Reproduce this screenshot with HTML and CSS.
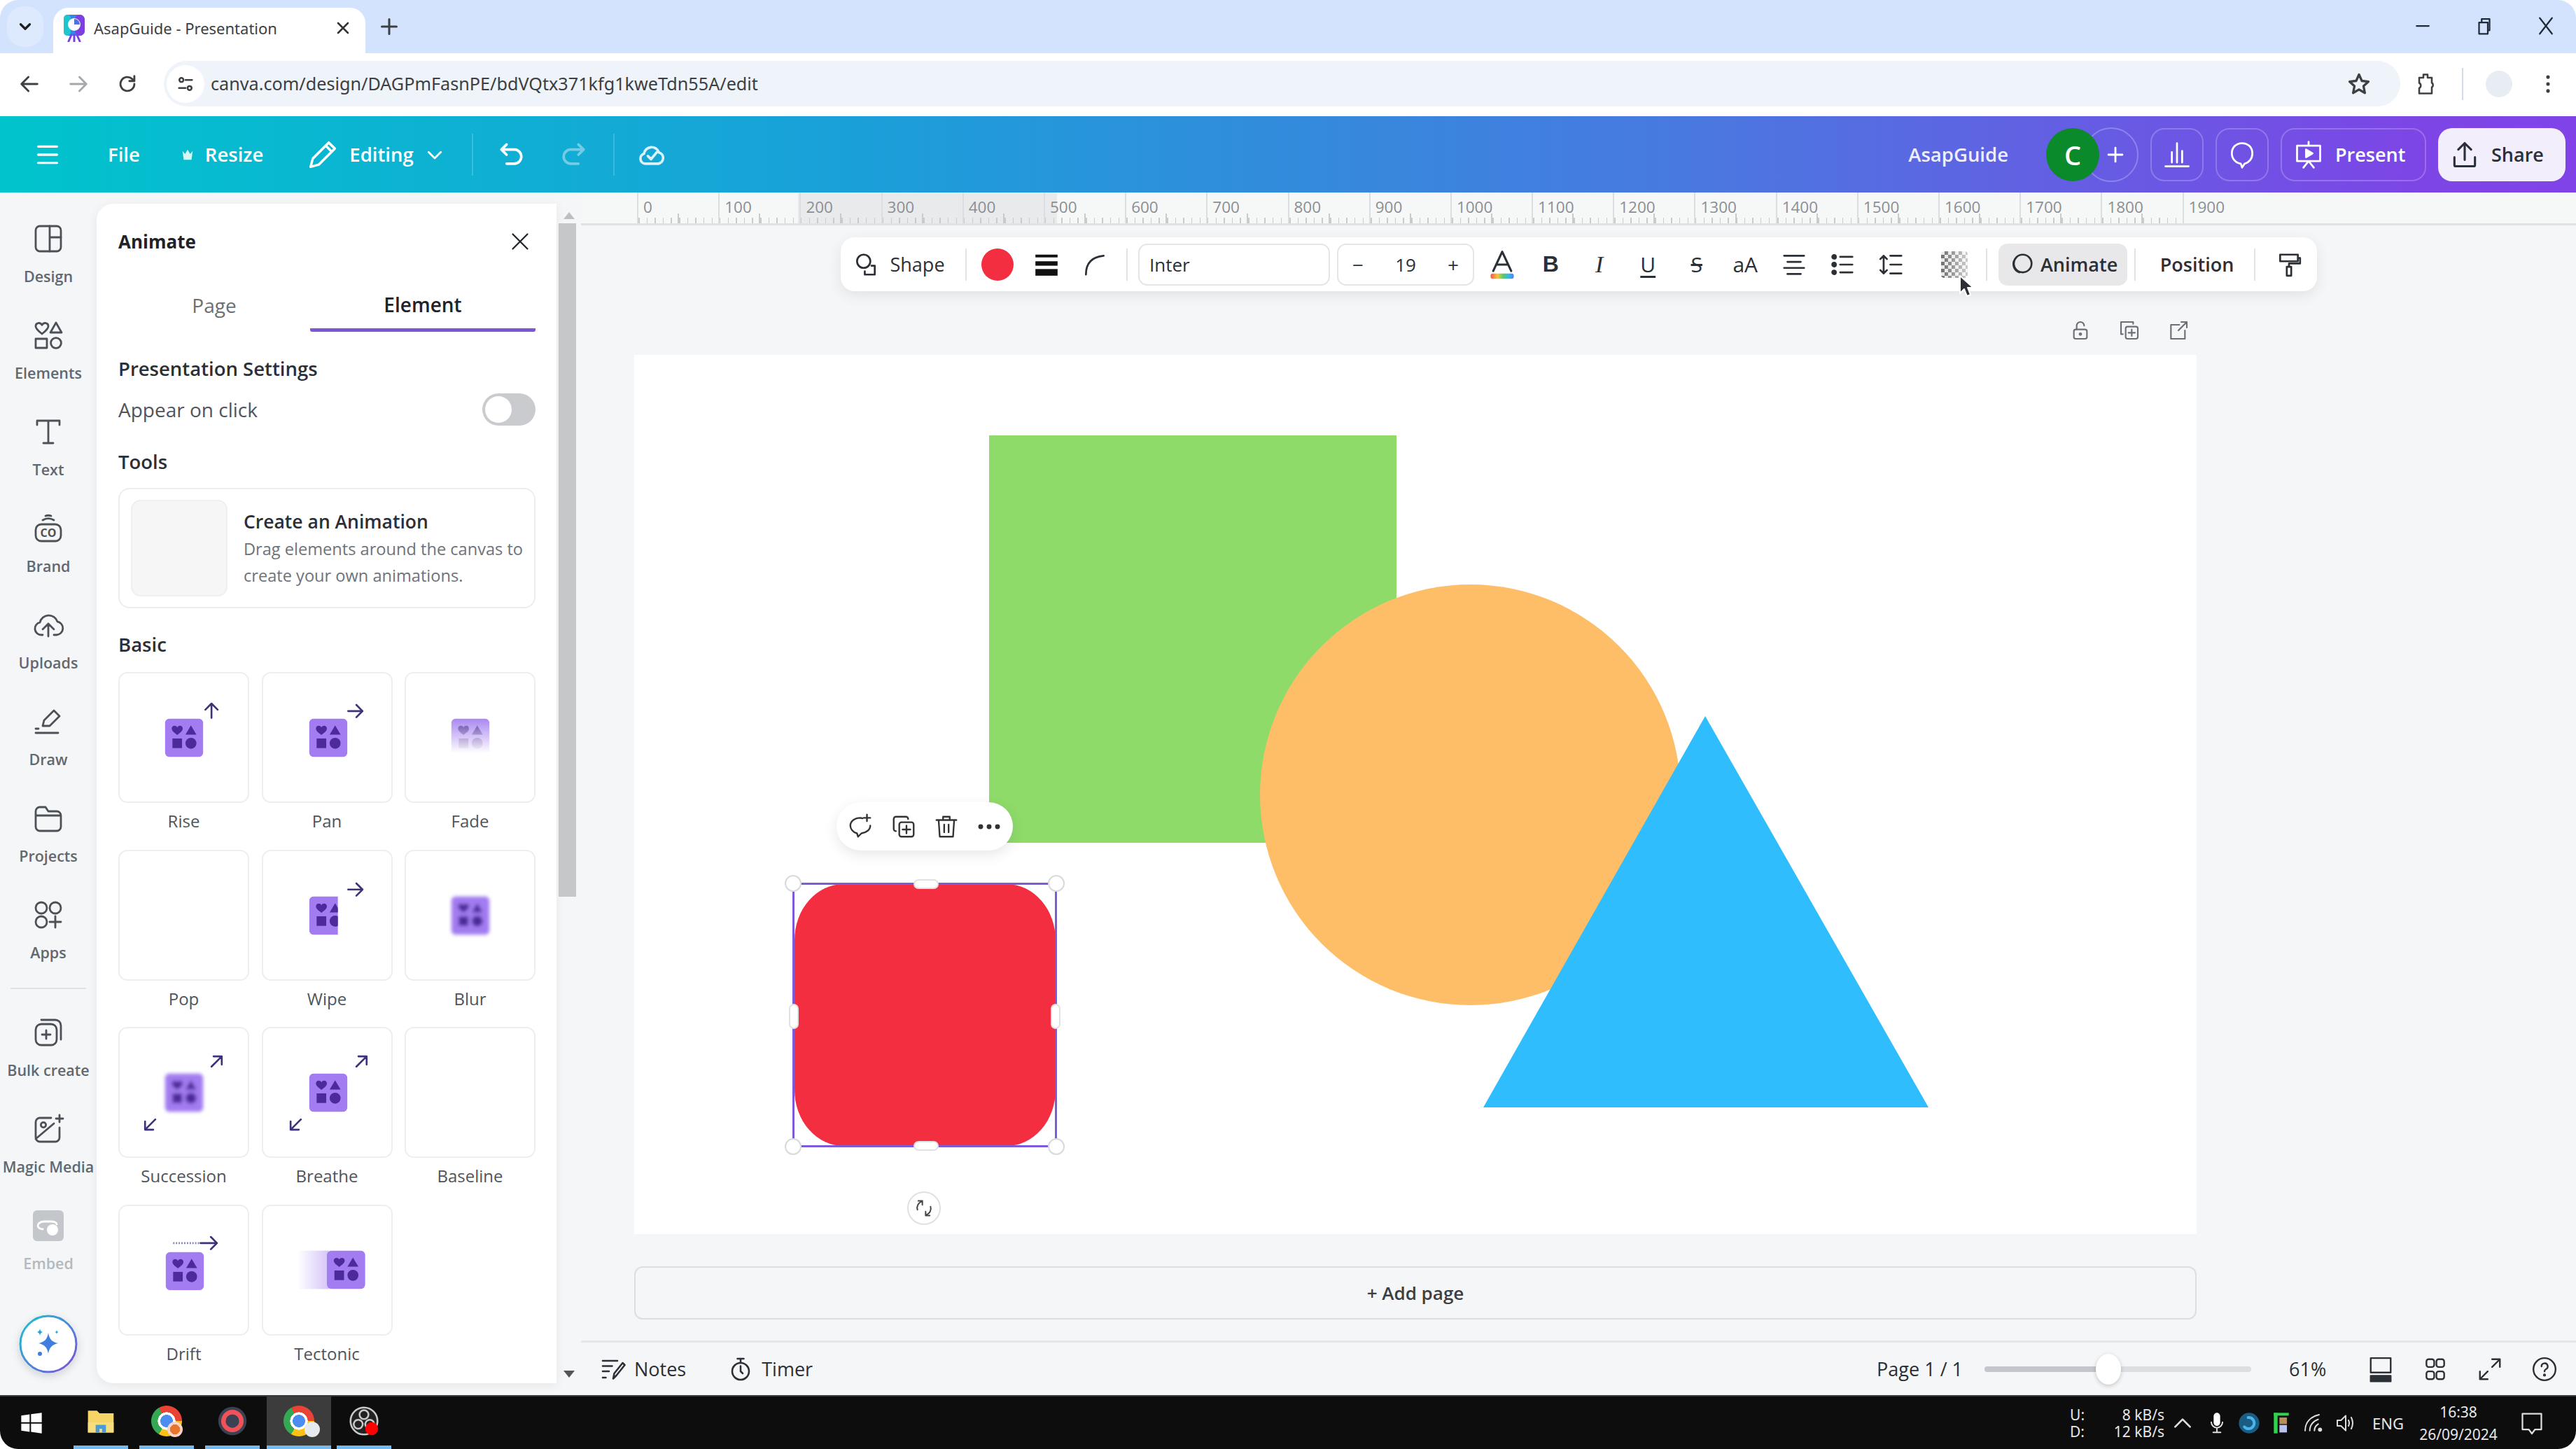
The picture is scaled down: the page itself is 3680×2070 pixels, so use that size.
FILE: index.html
```html
<!DOCTYPE html>
<html lang="en">
<head>
<meta charset="utf-8">
<title>AsapGuide - Presentation</title>
<link rel="stylesheet" href="styles.css">
</head>
<body>
<svg class="defs" width="0" height="0" aria-hidden="true">
  <defs>
    <symbol id="shapes" viewBox="0 0 56 56">
      <rect width="56" height="56" rx="7" fill="#a27cf0" stroke="none"/>
      <path d="M18 24c-3-2.600-8-5.500-8-9.500 0-4.500 6-5.500 8-1.500 2-4 8-3 8 1.500 0 4-5 6.900-8 9.500z" fill="#4c2a9a" stroke="none"/>
      <path d="M38 10l8 13.500H30z" fill="#4c2a9a" stroke="none"/>
      <rect x="11" y="29" width="14" height="14" fill="#4c2a9a" stroke="none"/>
      <circle cx="38" cy="36" r="8" fill="#4c2a9a" stroke="none"/>
    </symbol>
    <linearGradient id="fadeG" x1="0" y1="0" x2="0" y2="1"><stop offset="0" stop-color="#fff" stop-opacity=".05"/><stop offset=".85" stop-color="#fff" stop-opacity="1"/></linearGradient>
    <linearGradient id="trailG" x1="0" y1="0" x2="1" y2="0"><stop offset="0" stop-color="#a27cf0" stop-opacity="0"/><stop offset="1" stop-color="#a27cf0" stop-opacity=".45"/></linearGradient>
    <linearGradient id="aiG" x1="0" y1="0" x2="1" y2="1"><stop offset="0" stop-color="#16c5d0"/><stop offset="1" stop-color="#7d4ddd"/></linearGradient>
    <linearGradient id="rainbow" x1="0" y1="0" x2="1" y2="0"><stop offset="0" stop-color="#f55a4a"/><stop offset=".3" stop-color="#f8c537"/><stop offset=".55" stop-color="#52cc6e"/><stop offset=".8" stop-color="#2fb6f0"/><stop offset="1" stop-color="#5a7cf0"/></linearGradient>
    <filter id="soft"><feGaussianBlur stdDeviation="2.800"/></filter>
    <clipPath id="wipeClip"><rect x="67" y="60" width="42" height="70"/></clipPath>
  </defs>
</svg>

<div class="screen">
  <!-- Browser tabs -->
  <div class="tabstrip">
    <div class="tab-list"><svg class="ic-chev" viewBox="0 0 24 24"><path d="M6 9l6 6 6-6"/></svg></div>
    <div class="tab">
      <svg class="favicon" viewBox="0 0 32 40"><rect x="1" y="1" width="30" height="30" rx="7" fill="#3b82e8"/><rect x="17" y="1" width="14" height="30" rx="7" fill="#7d3fe0"/><rect x="1" y="1" width="10" height="30" rx="5" fill="#1fc4cf"/><circle cx="16" cy="15" r="9" fill="#fff"/><path d="M16 15V7a8 8 0 0 1 8 8z" fill="#4f72e0"/><path class="fav-legs" d="M12 30l-4 9M20 30l4 9M16 30v9"/></svg>
      <span class="tab-title">AsapGuide - Presentation</span>
      <svg class="tab-close" viewBox="0 0 24 24"><path d="M5 5l14 14M19 5L5 19"/></svg>
    </div>
    <svg class="tab-new" viewBox="0 0 24 24"><path d="M12 3v18M3 12h18"/></svg>
    <div class="winctl">
      <svg viewBox="0 0 24 24"><path d="M5 12h14"/></svg>
      <svg viewBox="0 0 24 24"><rect x="6" y="8" width="10" height="13"/><path d="M9 8V4h9v13h-2"/></svg>
      <svg viewBox="0 0 24 24"><path d="M5 3l14 18M19 3L5 21"/></svg>
    </div>
  </div>

  <!-- Browser toolbar -->
  <div class="browserbar">
    <svg class="bb-ic" viewBox="0 0 24 24"><path d="M20 12H5M11 5l-7 7 7 7"/></svg>
    <svg class="bb-ic dim" viewBox="0 0 24 24"><path d="M4 12h15M13 5l7 7-7 7"/></svg>
    <svg class="bb-ic" viewBox="0 0 24 24"><path d="M19 12a7 7 0 1 1-2.200-5.100L19 9M19 4v5h-5"/></svg>
    <div class="omnibox">
      <span class="tune"><svg viewBox="0 0 24 24"><circle cx="7" cy="7" r="2.500"/><path d="M12 7h8M4 17h8"/><circle cx="17" cy="17" r="2.500"/></svg></span>
      <span class="url">canva.com/design/DAGPmFasnPE/bdVQtx371kfg1kweTdn55A/edit</span>
      <svg class="star" viewBox="0 0 24 24"><path d="M12 3l2.700 6 6.300.7-4.700 4.300 1.300 6.500L12 17.200 6.400 20.500 7.700 14 3 9.700 9.300 9z"/></svg>
    </div>
    <svg class="bb-ic ext" viewBox="0 0 24 24"><path d="M6 6h4V3h4v3h4v5c1.500.5 1.500 3.500 0 4v6H6v-5c2-1 2-4 0-5z"/></svg>
    <span class="bb-sep"></span>
    <span class="avatar"></span>
    <svg class="bb-ic dots" viewBox="0 0 24 24"><circle cx="12" cy="5" r="1.800"/><circle cx="12" cy="12" r="1.800"/><circle cx="12" cy="19" r="1.800"/></svg>
  </div>

  <!-- Canva header -->
  <header class="header">
    <svg class="h-ic menu" viewBox="0 0 24 24"><path d="M4 5h16M4 12h16M4 19h16"/></svg>
    <span class="h-link file">File</span>
    <svg class="crown" viewBox="0 0 24 24"><path d="M4 6l4 5 4-7 4 7 4-5-2 14H6z" fill="#d8f6f6"/></svg>
    <span class="h-link resize">Resize</span>
    <svg class="h-ic pencil" viewBox="0 0 24 24"><path d="M4 20l1.500-5.500L16 4l4 4L9.500 18.500zM14 6l4 4"/></svg>
    <span class="h-link">Editing</span>
    <svg class="h-ic chev" viewBox="0 0 24 24"><path d="M5 9l7 7 7-7"/></svg>
    <span class="h-sep first"></span>
    <svg class="h-ic undo" viewBox="0 0 24 24"><path d="M8 4L4 8l4 4M4 8h10a5 5 0 0 1 0 11H8"/></svg>
    <svg class="h-ic redo" viewBox="0 0 24 24"><path d="M16 4l4 4-4 4M20 8H10a5 5 0 0 0 0 11h6"/></svg>
    <span class="h-sep second"></span>
    <svg class="h-ic cloud" viewBox="0 0 24 24"><path d="M7 19a4 4 0 0 1-1-7.800 6 6 0 0 1 11.600-1A4.500 4.500 0 0 1 17 19zM9 13l2.500 2.500L16 10"/></svg>
    <span class="h-name">AsapGuide</span>
    <span class="h-avatar">C</span>
    <span class="h-avatar-add"><svg viewBox="0 0 24 24"><path d="M12 5v14M5 12h14"/></svg></span>
    <span class="h-btn square"><svg viewBox="0 0 24 24"><path d="M3 21h18M8 18V10M12 18V3M16 18V9"/></svg></span>
    <span class="h-btn square"><svg viewBox="0 0 24 24"><path d="M12 3c5 0 8 3.600 8 8 0 4-2.500 7-6 8l-2 3-1-3c-4-.5-7-4-7-8 0-4.400 3-8 8-8z"/></svg></span>
    <span class="h-btn present"><svg viewBox="0 0 24 24"><path d="M3 5h18v12H3zM12 5V2M12 17l-4 5M12 17l4 5"/><path d="M10 8l5 3-5 3z" fill="#fff"/></svg>Present</span>
    <span class="h-btn share"><svg viewBox="0 0 24 24"><path d="M12 16V3M7 8l5-5 5 5M4 14v6a1 1 0 0 0 1 1h14a1 1 0 0 0 1-1v-6"/></svg>Share</span>
  </header>

  <div class="main">
    <!-- Side rail -->
    <nav class="rail">
      <div class="rail-group">
        <div class="rail-item"><svg viewBox="0 0 24 24"><rect x="3" y="3" width="18" height="18" rx="3"/><path d="M13 3v18M13 11h8"/></svg><span>Design</span></div>
        <div class="rail-item"><svg viewBox="0 0 24 24"><path d="M7.500 11C5.500 9.300 3 7.600 3 5.500 3 3 6.300 2.400 7.500 4.700 8.700 2.400 12 3 12 5.500c0 2.100-2.500 3.800-4.500 5.500zM17.500 3l4 7h-8zM3 14.500h8v6.500H3z"/><circle cx="17.500" cy="17.500" r="3.700"/></svg><span>Elements</span></div>
        <div class="rail-item"><svg viewBox="0 0 24 24"><path d="M4 7V4h16v3M12 4v16M8.500 20h7"/></svg><span>Text</span></div>
        <div class="rail-item"><svg viewBox="0 0 24 24"><rect x="3" y="9" width="18" height="12" rx="4"/><path d="M8 6c2.500-1.500 5.500-1.500 8 0M10 3c1.300-.5 2.700-.5 4 0"/><text x="12" y="18" class="co">CO</text></svg><span>Brand</span></div>
        <div class="rail-item"><svg viewBox="0 0 24 24"><path d="M8 19H7a4.500 4.500 0 0 1-1-8.900 6.500 6.500 0 0 1 12.500-.6A4.800 4.800 0 0 1 18 19h-2M8 15l4-4 4 4M12 11v9"/></svg><span>Uploads</span></div>
        <div class="rail-item"><svg viewBox="0 0 24 24"><path d="M8 15l1-4 7-7 4 4-7 7zM3 20h16M5 17H3"/></svg><span>Draw</span></div>
        <div class="rail-item"><svg viewBox="0 0 24 24"><path d="M3 7a3 3 0 0 1 3-3h4l2 3h6a3 3 0 0 1 3 3v8a3 3 0 0 1-3 3H6a3 3 0 0 1-3-3zM3 10h18"/></svg><span>Projects</span></div>
        <div class="rail-item"><svg viewBox="0 0 24 24"><circle cx="7" cy="7" r="4"/><circle cx="17" cy="7" r="4"/><circle cx="7" cy="17" r="4"/><path d="M17 13v8M13 17h8"/></svg><span>Apps</span></div>
      </div>
      <div class="rail-div"></div>
      <div class="rail-group">
        <div class="rail-item"><svg viewBox="0 0 24 24"><rect x="3" y="6" width="15" height="15" rx="4"/><path d="M7 3h10a4 4 0 0 1 4 4v10M10.500 10.500v6M7.500 13.500h6"/></svg><span>Bulk create</span></div>
        <div class="rail-item"><svg viewBox="0 0 24 24"><path d="M14 4H6a3 3 0 0 0-3 3v11a3 3 0 0 0 3 3h11a3 3 0 0 0 3-3v-7M3 19l13-11"/><circle cx="8.500" cy="9" r="1.800"/><path d="M20 2v5M17.500 4.500h5"/></svg><span>Magic Media</span></div>
        <div class="rail-item off"><svg viewBox="0 0 24 24"><rect x="1" y="1" width="22" height="22" rx="3" class="embed-bg"/><path class="embed-line" d="M8 14.500c-2 0-3.500-1.200-3.500-2.500S6 9 9 9h5c2 0 4 .8 4 2"/><circle class="embed-dot" cx="15" cy="15" r="4"/></svg><span>Embed</span></div>
      </div>
      <div class="ai-btn"><svg viewBox="0 0 84 84"><circle cx="42" cy="42" r="40" fill="#fff" stroke="url(#aiG)" stroke-width="3"/><path d="M42 26c1.500 9 5 13 14 15-9 2-12.500 6-14 15-1.500-9-5-13-14-15 9-2 12.500-6 14-15z" fill="#3f7ee0"/><path d="M30 20c.5 3 1.500 4 4 5-2.500 1-3.500 2-4 5-.5-3-1.500-4-4-5 2.500-1 3.500-2 4-5z" fill="#22a7d8"/><path d="M54 22c.4 2 1 2.600 3 3-2 .4-2.600 1-3 3-.4-2-1-2.600-3-3 2-.4 2.600-1 3-3z" fill="#22a7d8"/><circle cx="30" cy="56" r="3" fill="#3f7ee0"/></svg></div>
    </nav>

    <!-- Animate panel -->
    <div class="panel-wrap">
      <aside class="panel">
        <div class="panel-head"><span class="panel-title">Animate</span><svg class="panel-x" viewBox="0 0 24 24"><path d="M3 3l18 18M21 3L3 21"/></svg></div>
        <div class="ptabs"><span class="ptab">Page</span><span class="ptab active">Element</span></div>
        <h3 class="sec first">Presentation Settings</h3>
        <div class="row-toggle"><span>Appear on click</span><span class="toggle"><i></i></span></div>
        <h3 class="sec tools">Tools</h3>
        <div class="create">
          <div class="create-thumb"></div>
          <div class="create-text"><strong>Create an Animation</strong><p>Drag elements around the canvas to create your own animations.</p></div>
        </div>
        <h3 class="sec basic">Basic</h3>
        <div class="anim-grid">
          <div class="anim"><div class="tile"><svg viewBox="0 0 187 187"><use href="#shapes" x="66" y="66" width="56" height="56"/><path class="arr" d="M134 65V44M125 53l9-9 9 9"/></svg></div><span>Rise</span></div>
          <div class="anim"><div class="tile"><svg viewBox="0 0 187 187"><use href="#shapes" x="67" y="66" width="56" height="56"/><path class="arr" d="M124 55h21M136 46l9 9-9 9"/></svg></div><span>Pan</span></div>
          <div class="anim"><div class="tile"><svg viewBox="0 0 187 187"><use href="#shapes" x="66" y="66" width="56" height="56"/><rect x="64" y="64" width="60" height="62" fill="url(#fadeG)" stroke="none"/></svg></div><span>Fade</span></div>
          <div class="anim"><div class="tile"></div><span>Pop</span></div>
          <div class="anim"><div class="tile"><svg viewBox="0 0 187 187"><g clip-path="url(#wipeClip)"><use href="#shapes" x="67" y="66" width="56" height="56"/></g><path class="arr" d="M124 56h21M136 47l9 9-9 9"/></svg></div><span>Wipe</span></div>
          <div class="anim"><div class="tile"><svg viewBox="0 0 187 187"><use href="#shapes" x="66" y="66" width="56" height="56" filter="url(#soft)"/></svg></div><span>Blur</span></div>
          <div class="anim"><div class="tile"><svg viewBox="0 0 187 187"><use href="#shapes" x="66" y="66" width="56" height="56" filter="url(#soft)"/><path class="arr" d="M134 56l15-15M137 41h12v12M52 133l-15 15M49 148H37v-12"/></svg></div><span>Succession</span></div>
          <div class="anim"><div class="tile"><svg viewBox="0 0 187 187"><use href="#shapes" x="67" y="66" width="56" height="56"/><path class="arr" d="M136 56l15-15M139 41h12v12M55 133l-15 15M52 148H40v-12"/></svg></div><span>Breathe</span></div>
          <div class="anim"><div class="tile"></div><span>Baseline</span></div>
          <div class="anim"><div class="tile"><svg viewBox="0 0 187 187"><use href="#shapes" x="67" y="67" width="56" height="56"/><path class="arr dotted" d="M78 54h40"/><path class="arr" d="M118 54h24M133 45l9 9-9 9"/></svg></div><span>Drift</span></div>
          <div class="anim"><div class="tile"><svg viewBox="0 0 187 187"><rect x="50" y="65" width="46" height="56" fill="url(#trailG)" stroke="none"/><use href="#shapes" x="93" y="65" width="56" height="56"/></svg></div><span>Tectonic</span></div>
        </div>
      </aside>
      <div class="pscroll">
        <i class="up"></i>
        <div class="pscroll-track"><div class="pscroll-thumb"></div></div>
        <i class="down"></i>
      </div>
    </div>

    <!-- Workspace -->
    <section class="work">
      <div class="ruler">
        <span class="ruler-sel"></span>
        <span class="rc">0</span><span class="rc">100</span><span class="rc">200</span><span class="rc">300</span><span class="rc">400</span><span class="rc">500</span><span class="rc">600</span><span class="rc">700</span><span class="rc">800</span><span class="rc">900</span><span class="rc">1000</span><span class="rc">1100</span><span class="rc">1200</span><span class="rc">1300</span><span class="rc">1400</span><span class="rc">1500</span><span class="rc">1600</span><span class="rc">1700</span><span class="rc">1800</span><span class="rc last">1900</span>
      </div>
      <div class="stage">
        <div class="ctx">
          <div class="ctx-shape"><svg class="ci" viewBox="0 0 24 24"><circle cx="10" cy="9" r="6"/><path d="M17 13h3v8h-9v-3"/></svg><span>Shape</span></div>
          <span class="ctx-sep"></span>
          <div class="cell"><span class="swatch"></span></div>
          <div class="cell"><svg class="ci solid" viewBox="0 0 24 24"><rect x="2" y="3" width="20" height="2.500"/><rect x="2" y="9" width="20" height="4"/><rect x="2" y="16" width="20" height="6"/></svg></div>
          <div class="cell"><svg class="ci" viewBox="0 0 24 24"><path d="M4 21C4 11 9 5 20 4"/></svg></div>
          <span class="ctx-sep"></span>
          <div class="font-box">Inter</div>
          <div class="size-box"><span>−</span><span class="size-v">19</span><span>+</span></div>
          <div class="cell"><svg class="ci big" viewBox="0 0 24 24"><path d="M5 17L12 2l7 15M7.500 12h9"/><rect x="3" y="19" width="18" height="4" rx="1.500" fill="url(#rainbow)" stroke="none"/></svg></div>
          <div class="cell txt b">B</div>
          <div class="cell txt i">I</div>
          <div class="cell txt u">U</div>
          <div class="cell txt s">S</div>
          <div class="cell txt">aA</div>
          <div class="cell"><svg class="ci" viewBox="0 0 24 24"><path d="M3 4h18M6 9.500h12M3 15h18M6 20.500h12"/></svg></div>
          <div class="cell"><svg class="ci" viewBox="0 0 24 24"><path d="M10 5h11M10 12h11M10 19h11"/><circle cx="4.500" cy="5" r="1.600" class="fill"/><circle cx="4.500" cy="12" r="1.600" class="fill"/><circle cx="4.500" cy="19" r="1.600" class="fill"/></svg></div>
          <div class="cell"><svg class="ci" viewBox="0 0 24 24"><path d="M11 4h10M11 12h10M11 20h10M5 4v16M2 7l3-3 3 3M2 17l3 3 3-3"/></svg></div>
          <div class="cell trans"><span class="checker"></span><svg class="cursor" viewBox="0 0 24 34"><path d="M2 2v25l6-6 4 10 5-2-4-10h8z"/></svg></div>
          <span class="ctx-sep"></span>
          <div class="anim-btn"><svg class="ci" viewBox="0 0 24 24"><circle cx="13" cy="11" r="8"/><path d="M5 9a8 8 0 0 0 5 10"/></svg>Animate</div>
          <span class="ctx-sep"></span>
          <div class="pos">Position</div>
          <span class="ctx-sep"></span>
          <div class="cell paint"><svg class="ci" viewBox="0 0 24 24"><path d="M4 3h16v6H4zM20 6h2v5H12v3M10 14h4v8h-4z"/></svg></div>
        </div>
        <div class="canvas-col">
          <div class="page-actions">
            <svg viewBox="0 0 24 24"><rect x="5" y="11" width="14" height="10" rx="2"/><path d="M8 11V7a4 4 0 0 1 8 0"/><circle cx="12" cy="16" r="1"/></svg>
            <svg viewBox="0 0 24 24"><rect x="8" y="8" width="13" height="13" rx="2"/><path d="M5 16H3V3h13v2M14.500 11v7M11 14.500h7"/></svg>
            <svg viewBox="0 0 24 24"><path d="M13 6H4v15h15v-9M15 3h6v6M21 3l-9 9"/></svg>
          </div>
          <div class="page">
            <div class="shape green"></div>
            <div class="shape orange"></div>
            <svg class="shape tri" viewBox="0 0 636 559"><path d="M317 0l319 559H0z"/></svg>
            <div class="shape red"></div>
            <div class="sel">
              <i class="hd hd-tl"></i><i class="hd hd-tr"></i><i class="hd hd-bl"></i><i class="hd hd-br"></i>
              <i class="bar tm"></i><i class="bar bm"></i><i class="bar lm"></i><i class="bar rm"></i>
            </div>
            <div class="float">
              <svg viewBox="0 0 24 24"><path d="M14 4.500A10 10 0 0 0 12 4C7 4 3 7 3 11c0 3 2.500 6 6 7l1 3 3-3c4-.5 8-3 8-7M18 1v6M15 4h6"/></svg>
              <svg viewBox="0 0 24 24"><rect x="8" y="8" width="13" height="13" rx="2"/><path d="M5 16a2 2 0 0 1-2-2V5a2 2 0 0 1 2-2h9a2 2 0 0 1 2 2M14.500 11v7M11 14.500h7"/></svg>
              <svg viewBox="0 0 24 24"><path d="M3 6h18M9 6V3h6v3M5 6l1 15h12l1-15M10 10v7M14 10v7"/></svg>
              <svg class="more" viewBox="0 0 24 24"><circle cx="4" cy="12" r="2.300"/><circle cx="12" cy="12" r="2.300"/><circle cx="20" cy="12" r="2.300"/></svg>
            </div>
            <div class="rotate"><svg viewBox="0 0 24 24"><path d="M4 14a8 8 0 0 1 5-10M5 3h5v5M20 10a8 8 0 0 1-5 10M19 21h-5v-5"/></svg></div>
          </div>
          <div class="addpage">+ Add page</div>
        </div>
      </div>
      <footer class="bottombar">
        <div class="bb-item"><svg viewBox="0 0 24 24"><path d="M2 4h14M2 9h9M2 14h6M2 20h3M12 21l1-5 8-10 2 2-8 10z"/></svg>Notes</div>
        <div class="bb-item timer"><svg viewBox="0 0 24 24"><circle cx="12" cy="14" r="8"/><path d="M9 2h6M12 2v4M12 9v5l2 2"/></svg>Timer</div>
        <div class="bb-page">Page 1 / 1</div>
        <div class="slider"><div class="slider-fill"></div><i class="knob"></i></div>
        <div class="pct">61%</div>
        <div class="bb-icons">
          <svg viewBox="0 0 24 24"><rect x="3" y="2" width="18" height="13"/><rect x="3" y="18" width="18" height="5" class="fill"/></svg>
          <svg viewBox="0 0 24 24"><rect x="4" y="3" width="7" height="7" rx="2"/><rect x="13" y="3" width="7" height="7" rx="2"/><rect x="4" y="14" width="7" height="7" rx="2"/><rect x="13" y="14" width="7" height="7" rx="2"/></svg>
          <svg viewBox="0 0 24 24"><path d="M14 3h7v7M21 3l-7 7M3 14v7h7M3 21l7-7"/></svg>
          <svg viewBox="0 0 24 24"><circle cx="12" cy="12" r="10"/><path d="M9.300 9.500a2.800 2.800 0 1 1 4 2.500c-1 .5-1.300 1-1.300 2"/><circle cx="12" cy="17.300" r=".6"/></svg>
        </div>
      </footer>
    </section>
  </div>

  <!-- Windows taskbar -->
  <div class="taskbar">
    <div class="start"><svg viewBox="0 0 24 24"><path d="M1 4l9-1.300V11H1zM11.500 2.500L23 1v10H11.500zM1 12.500h9v8.800L1 20zM11.500 12.500H23V23l-11.500-1.600z" fill="#fff"/></svg></div>
    <div class="task run"><svg viewBox="0 0 24 24"><path d="M2 4h7l2 2h11v15H2z" fill="#f6d465"/><path d="M2 13h20v8H2z" fill="#f8dd7d"/><path d="M8 21v-6h8v6h-3v-3h-2v3z" fill="#4a9ad8"/></svg></div>
    <div class="task run"><span class="chrome"></span><i class="badge orange-b"></i></div>
    <div class="task run"><svg viewBox="0 0 24 24"><circle cx="12" cy="12" r="11" fill="#3a4152"/><circle cx="12" cy="12" r="7" fill="none" stroke="#ef5359" stroke-width="3.500"/></svg></div>
    <div class="task run active"><span class="chrome"></span><i class="badge white-b"></i></div>
    <div class="task run"><svg viewBox="0 0 24 24"><circle cx="12" cy="12" r="10.500" fill="#222" stroke="#c9c9c9" stroke-width="1.400"/><circle cx="12" cy="7" r="3.500" fill="none" stroke="#c9c9c9" stroke-width="1.400"/><circle cx="7.500" cy="14.500" r="3.500" fill="none" stroke="#c9c9c9" stroke-width="1.400"/><circle cx="16.500" cy="14.500" r="3.500" fill="none" stroke="#c9c9c9" stroke-width="1.400"/><circle cx="18" cy="18" r="5" fill="#f00"/></svg></div>
    <div class="tray">
      <div class="net"><span>U:</span><span>8 kB/s</span><span>D:</span><span>12 kB/s</span></div>
      <svg class="tr chevup" viewBox="0 0 24 24"><path d="M4 16l8-8 8 8"/></svg>
      <svg class="tr" viewBox="0 0 24 24"><rect x="8.500" y="1" width="7" height="14" rx="3.500" fill="#fff" stroke="none"/><path d="M6 11a6 6 0 0 0 12 0M12 17v4M8 22h8"/></svg>
      <svg class="tr" viewBox="0 0 24 24"><circle cx="12" cy="12" r="11" fill="#1b5c83" stroke="none"/><path d="M11 6a6 6 0 1 1-4 10" stroke="#4bb5ea" stroke-width="3"/></svg>
      <svg class="tr" viewBox="0 0 24 24"><rect x="4" y="1" width="16" height="22" fill="#111" stroke="none"/><rect x="4" y="1" width="4" height="22" fill="#2fd34c" stroke="none"/><rect x="4" y="1" width="16" height="3" fill="#2fd34c" stroke="none"/><rect x="10" y="6" width="8" height="7" fill="#b98e5a" stroke="none"/><rect x="10" y="14" width="8" height="8" fill="#b9c4f0" stroke="none"/></svg>
      <svg class="tr" viewBox="0 0 24 24"><path d="M3 20c0-9 6-15 15-17M8 20c0-6 4-10 9-12M13 20c0-3 1-5 4-7"/><circle cx="19" cy="19" r="2.200" fill="#ddd" stroke="none"/></svg>
      <svg class="tr" viewBox="0 0 24 24"><path d="M3 9h4l5-5v16l-5-5H3zM15 9c1 2 1 4 0 6M18 6c2 4 2 8 0 12"/></svg>
      <span class="lang">ENG</span>
      <div class="clock"><span>16:38</span><span>26/09/2024</span></div>
      <svg class="tr chat" viewBox="0 0 24 24"><path d="M3 3h18v15h-6l-3 4-3-4H3z"/></svg>
    </div>
  </div>
</div>
</body>
</html>
```
FILE: styles.css
```css
* { box-sizing: border-box; }
html, body { margin: 0; padding: 0; background: #fff; }
body { width: 3680px; height: 2070px; overflow: hidden; font-family: "Open Sans", "Noto Sans", sans-serif; color: #2b2f36; }
svg { display: block; fill: none; stroke: currentColor; stroke-linecap: round; stroke-linejoin: round; flex: none; }
.defs { position: absolute; }
.screen { width: 3680px; height: 2070px; border-radius: 26px; overflow: hidden; display: grid; grid-template-rows: 76px 90px 109px 1fr 77px; background: #f5f6f7; }

/* tab strip */
.tabstrip { background: #d3e3fd; display: flex; align-items: flex-end; padding-left: 10px; position: relative; }
.tab-list { width: 52px; height: 58px; margin-bottom: 9px; border-radius: 24px; background: #dde9fd; display: flex; align-items: center; justify-content: center; }
.ic-chev { width: 26px; height: 26px; stroke: #1f1f1f; stroke-width: 3; }
.tab { width: 446px; height: 65px; margin-left: 14px; background: #fff; border-radius: 22px 22px 0 0; display: flex; align-items: center; padding: 0 20px 8px 14px; }
.favicon { width: 32px; height: 40px; stroke: none; }
.fav-legs { stroke: #7d3fe0; stroke-width: 3; }
.tab-title { font: 400 22px/1 "Noto Sans", sans-serif; color: #3c4043; margin-left: 12px; white-space: nowrap; flex: 1; }
.tab-close { width: 24px; height: 24px; stroke: #333; stroke-width: 2.600; }
.tab-new { width: 28px; height: 28px; stroke: #3c4043; stroke-width: 2.600; margin: 0 0 24px 20px; }
.winctl { margin-left: auto; display: flex; gap: 58px; padding-right: 28px; margin-bottom: 24px; }
.winctl svg { width: 30px; height: 30px; stroke: #1f2937; stroke-width: 1.800; }

/* browser toolbar */
.browserbar { background: #fff; display: flex; align-items: center; padding: 0 5px 3px 7px; }
.bb-ic { width: 34px; height: 34px; margin: 0 18px; stroke: #3c4043; stroke-width: 2; }
.bb-ic.dim { stroke: #a5a8ac; }
.bb-ic.ext { height: 44px; width: 36px; stroke-width: 1.700; }
.dots { fill: #3c4043; stroke: none; margin-left: 34px; }
.omnibox { flex: 1; height: 65px; margin: 0 0 0 17px; border-radius: 33px; background: #eff3fa; display: flex; align-items: center; padding-left: 4px; }
.tune { width: 54px; height: 54px; border-radius: 50%; background: #fff; display: flex; align-items: center; justify-content: center; }
.tune svg { width: 28px; height: 28px; stroke: #3c4043; stroke-width: 2.200; }
.url { font: 400 25.200px/1 "Noto Sans", sans-serif; color: #3c4043; margin-left: 9px; white-space: nowrap; }
.star { width: 36px; height: 36px; margin-left: auto; margin-right: 41px; stroke: #3c4043; stroke-width: 2.200; }
.bb-sep { width: 2px; height: 46px; background: #d5dbe3; margin-left: 16px; }
.avatar { width: 38px; height: 38px; border-radius: 50%; background: #e8edf3; margin-left: 32px; }

/* header */
.header { background: linear-gradient(90deg, #00c4cc 0%, #1aa0d9 33%, #4a78e0 66%, #7d45e6 94%, #8143e8 100%); display: flex; align-items: center; color: #fff; padding-left: 48px; padding-right: 15px; font-weight: 600; }
.h-ic { stroke: #fff; stroke-width: 2; width: 40px; height: 40px; }
.h-link { font-size: 27.500px; color: #fff; white-space: nowrap; }
.file { margin-left: 66px; }
.crown { width: 22px; height: 22px; stroke: none; margin-left: 57px; }
.resize { margin-left: 14px; }
.pencil { margin-left: 59px; margin-right: 12px; width: 52px; height: 52px; stroke-width: 1.600; }
.chev { width: 30px; height: 30px; margin-left: 15px; stroke-width: 2.200; }
.h-sep { width: 2px; height: 60px; background: rgba(255,255,255,.18); }
.h-sep.first { margin-left: 38px; }
.h-sep.second { margin-left: 35px; }
.undo { margin-left: 33px; width: 44px; height: 44px; }
.redo { margin-left: 44px; width: 44px; height: 44px; opacity: .4; }
.cloud { width: 44px; height: 44px; margin-left: 31px; opacity: .85; }
.h-name { margin-left: auto; font-size: 27.500px; color: #eef; }
.h-avatar { width: 76px; height: 76px; border-radius: 50%; background: #0a8a2a; margin-left: 50px; font-size: 38px; font-weight: 600; display: flex; align-items: center; justify-content: center; position: relative; left: 4px; z-index: 1; }
.h-avatar-add { width: 78px; height: 78px; border-radius: 50%; border: 2px solid rgba(255,255,255,.25); margin-left: -18px; display: flex; align-items: center; justify-content: center; padding-left: 12px; }
.h-avatar-add svg { width: 34px; height: 34px; stroke: #fff; stroke-width: 2; }
.h-btn { height: 76px; border-radius: 20px; border: 2px solid rgba(255,255,255,.22); display: flex; align-items: center; font-size: 27px; margin-left: 17px; }
.h-btn svg { stroke: #fff; stroke-width: 1.500; width: 44px; height: 44px; }
.h-btn.square { width: 76px; justify-content: center; }
.h-btn.present { width: 208px; padding-left: 16px; gap: 16px; }
.h-btn.share { width: 182px; margin-left: 17px; background: #f3eefc; color: #2b2f36; border: none; padding-left: 16px; gap: 16px; }
.h-btn.share svg { stroke: #2b2f36; stroke-width: 1.700; }

/* main */
.main { display: flex; min-height: 0; }
.rail { width: 138px; flex: none; display: flex; flex-direction: column; padding-top: 42px; padding-bottom: 31px; }
.rail-group { display: flex; flex-direction: column; gap: 42px; }
.rail-item { height: 96px; display: flex; flex-direction: column; align-items: center; color: #62686f; }
.rail-item svg { width: 48px; height: 48px; stroke: #4c5158; stroke-width: 1.400; margin-bottom: 12px; }
.rail-item span { font-size: 21.500px; line-height: 36px; font-weight: 600; white-space: nowrap; }
.co { font: 700 8px "Open Sans", sans-serif; text-anchor: middle; fill: #4c5158; stroke: none; }
.rail-item.off span { color: #b5b9be; }
.embed-bg { fill: #c3c6ca; stroke: none; }
.embed-line { stroke: #fff; }
.embed-dot { fill: #fff; stroke: none; }
.rail-div { height: 2px; margin: 32px 15px 38px; background: #dfe1e4; }
.ai-btn { margin: auto 0 0 27px; width: 84px; height: 84px; border-radius: 50%; box-shadow: 0 4px 12px rgba(60,70,90,.2); }
.ai-btn svg { width: 84px; height: 84px; stroke: none; }
.ai-btn circle:first-child { stroke: url(#aiG); }

/* panel */
.panel-wrap { width: 692px; flex: none; display: flex; padding: 16px 0 17px; position: relative; z-index: 2; }
.panel { width: 657px; flex: none; background: #fff; border-radius: 24px 0 0 24px; padding: 0 30px 0 31px; box-shadow: 0 3px 14px rgba(50,60,70,.08); overflow: hidden; }
.panel-head { height: 108px; display: flex; align-items: center; justify-content: space-between; }
.panel-title { font-size: 26px; font-weight: 700; color: #1f2329; }
.panel-x { width: 28px; height: 28px; stroke: #1f2329; stroke-width: 1.900; margin-right: 8px; }
.ptabs { display: grid; grid-template-columns: 274px 322px; height: 75px; }
.ptab { text-align: center; font-size: 28px; line-height: 74px; color: #6a6f76; }
.ptab.active { color: #1f2329; font-weight: 600; border-bottom: 5px solid #7d56d8; border-radius: 0 0 3px 3px; height: 75px; line-height: 72px; }
.sec { margin: 0; font-size: 27.500px; font-weight: 600; line-height: 38px; color: #2b2f36; }
.sec.first { margin-top: 34px; }
.row-toggle { display: flex; align-items: center; justify-content: space-between; height: 46px; margin-top: 16px; font-size: 28px; color: #50555c; }
.toggle { width: 76px; height: 46px; border-radius: 23px; background: #c9cbce; padding: 4px; display: block; }
.toggle i { display: block; width: 38px; height: 38px; border-radius: 50%; background: #fff; }
.sec.tools { margin-top: 33px; }
.create { margin-top: 18px; height: 172px; border: 2px solid #ebedef; border-radius: 16px; display: flex; align-items: center; padding-left: 16px; }
.create-thumb { width: 138px; height: 138px; border-radius: 14px; background: #f6f6f7; border: 2px solid #eeeff0; flex: none; }
.create-text { margin-left: 23px; }
.create-text strong { display: block; font-size: 26.500px; line-height: 38px; font-weight: 600; color: #2b2f36; }
.create-text p { margin: 1px 0 0; font-size: 23.600px; line-height: 38px; color: #6e737a; width: 410px; }
.sec.basic { margin-top: 33px; }
.anim-grid { margin-top: 20px; display: grid; grid-template-columns: repeat(3, 187px); column-gap: 17.500px; grid-auto-rows: 253.700px; }
.anim { display: flex; flex-direction: column; align-items: center; }
.tile { width: 187px; height: 187px; border: 2px solid #eceef0; border-radius: 13px; background: #fff; }
.tile svg { width: 183px; height: 183px; }
.anim span { font-size: 24px; line-height: 52px; color: #4f545b; }
.arr { stroke: #3d3378; stroke-width: 2.700; }
.dotted { stroke-dasharray: 2 2; stroke-linecap: butt; stroke-opacity: .6; }
.pscroll { width: 35px; flex: none; display: flex; flex-direction: column; align-items: center; padding-top: 12px; padding-bottom: 8px; }
.pscroll .up { width: 0; height: 0; border: 8px solid transparent; border-bottom: 10px solid #bdbfc2; border-top: 0; }
.pscroll .down { width: 0; height: 0; border: 8px solid transparent; border-top: 10px solid #555; border-bottom: 0; margin-top: auto; }
.pscroll-track { width: 25px; height: 962px; margin-top: 6px; margin-left: -4px; background: #c6c7c9; }
.pscroll-thumb { height: 100%; }

/* workspace */
.work { flex: 1; min-width: 0; display: flex; flex-direction: column; }
.ruler { height: 47px; flex: none; display: flex; padding-left: 80px; border-bottom: 3px solid #e0e2e4; background: #f6f7f7; position: relative; }
.ruler-sel { position: absolute; left: 310px; width: 370px; top: 0; bottom: 0; background: #e9eaeb; }
.rc { width: 116.200px; flex: none; border-left: 2px solid #dcdde0; font-size: 22.500px; line-height: 42px; padding-left: 7px; color: #8b8f94; position: relative; background: linear-gradient(#c8cacc, #c8cacc) 50% 100% / 2px 14px no-repeat, repeating-linear-gradient(90deg, #c8cacc 0, #c8cacc 1.500px, transparent 1.500px, transparent 11.620px) 0 100% / 100% 8px no-repeat; }
.rc.last { background: none; }
.stage { flex: 1; min-height: 0; display: flex; flex-direction: column; }
.ctx { align-self: center; margin-top: 17px; width: 2109px; height: 77px; flex: none; background: #fff; border-radius: 20px; box-shadow: 0 6px 18px rgba(50,60,70,.1); display: flex; align-items: center; padding-left: 15px; position: relative; z-index: 1; font-size: 27px; color: #2b2f36; }
.ci { width: 38px; height: 38px; stroke: #2b2f36; stroke-width: 1.700; }
.ci.solid { fill: #111; stroke: none; }
.ci.big { width: 44px; height: 52px; }
.fill { fill: #2b2f36; }
.ctx-shape { width: 153px; display: flex; align-items: center; gap: 16px; padding-left: 2px; }
.ctx-shape span { font-weight: 500; }
.ctx-sep { width: 2px; height: 46px; background: #e3e4e6; margin: 0 10px; flex: none; }
.cell { width: 69.500px; flex: none; display: flex; align-items: center; justify-content: center; font-size: 30px; }
.swatch { width: 46px; height: 46px; border-radius: 50%; background: #f22e40; }
.txt.b { font-weight: 800; font-family: "Liberation Sans", sans-serif; font-size: 32px; }
.txt.i { font-style: italic; font-family: "Liberation Serif", serif; font-size: 34px; }
.txt.u { text-decoration: underline; text-underline-offset: 5px; font-weight: 400; }
.txt.s { text-decoration: line-through; font-weight: 400; }
.font-box { width: 274px; height: 60px; border: 2px solid #e4e5e7; border-radius: 13px; flex: none; padding-left: 14px; line-height: 56px; font-size: 26px; margin-left: 5px; }
.size-box { width: 196px; height: 60px; margin-left: 10px; border: 2px solid #e4e5e7; border-radius: 13px; flex: none; display: flex; align-items: center; justify-content: space-between; padding: 0 20px; font-size: 28px; margin-right: 5px; }
.size-v { font-size: 26px; }
.trans { margin-left: 21px; position: relative; }
.checker { width: 38px; height: 38px; background: conic-gradient(#333 25%, #ddd 0 50%, #333 0 75%, #ddd 0) 0 0 / 10px 10px; opacity: .7; border-radius: 4px; -webkit-mask-image: linear-gradient(90deg, #000, rgba(0,0,0,.35)); mask-image: linear-gradient(90deg, #000, rgba(0,0,0,.35)); }
.cursor { position: absolute; left: 40px; top: 33px; width: 24px; height: 34px; fill: #2b2f36; stroke: #fff; stroke-width: 2; z-index: 3; }
.anim-btn { width: 184px; height: 60px; margin-left: 6px; border-radius: 13px; background: #e8e8ea; display: flex; align-items: center; gap: 8px; padding-left: 14px; flex: none; font-weight: 600; }
.pos { width: 133px; text-align: center; margin-left: 11px; margin-right: 5px; font-weight: 600; flex: none; }
.paint { margin-left: 3px; }
.canvas-col { width: 2232px; margin-left: 76px; display: flex; flex-direction: column; flex: 1; }
.page-actions { height: 60px; margin-top: 26px; margin-bottom: 5px; display: flex; justify-content: flex-end; align-items: center; gap: 38px; padding-right: 10px; flex: none; }
.page-actions svg { width: 32px; height: 32px; stroke: #6b7077; stroke-width: 1.600; }
.page { width: 2232px; height: 1256px; background: #fff; position: relative; flex: none; }
.shape { position: absolute; }
.green { left: 507px; top: 115px; width: 582px; height: 582px; background: #8edb69; }
.orange { left: 894px; top: 328px; width: 601px; height: 601px; border-radius: 50%; background: #fdbe67; }
.tri { left: 1213px; top: 516px; width: 636px; height: 559px; fill: #2fbdfd; stroke: none; }
.red { left: 229px; top: 756px; width: 373px; height: 374px; border-radius: 70px / 80px; background: #f22e40; }
.sel { position: absolute; left: 226px; top: 754px; width: 378px; height: 378px; border: 3px solid #7d5ad8; }
.hd { position: absolute; width: 24px; height: 24px; border-radius: 50%; background: #fff; border: 2px solid #d8d9db; }
.hd-tl { left: -14px; top: -14px; } .hd-tr { right: -14px; top: -14px; } .hd-bl { left: -14px; bottom: -14px; } .hd-br { right: -14px; bottom: -14px; }
.bar { position: absolute; background: #fff; border: 2px solid #e0e1e3; border-radius: 7px; }
.tm, .bm { width: 36px; height: 14px; left: 170px; }
.tm { top: -8px; } .bm { bottom: -8px; }
.lm, .rm { width: 14px; height: 36px; top: 170px; }
.lm { left: -8px; } .rm { right: -8px; }
.float { position: absolute; left: 289px; top: 639px; width: 252px; height: 69px; border-radius: 35px; background: #fff; box-shadow: 0 6px 18px rgba(50,60,70,.12); display: flex; align-items: center; justify-content: space-between; padding: 0 16px 0 15px; }
.float svg { width: 38px; height: 38px; stroke: #333; stroke-width: 1.500; }
.float .more { fill: #333; stroke: none; width: 36px; height: 36px; }
.rotate { position: absolute; left: 390px; top: 1195px; width: 48px; height: 48px; border-radius: 50%; background: #fff; border: 2px solid #dfe0e2; display: flex; align-items: center; justify-content: center; }
.rotate svg { width: 28px; height: 28px; stroke: #444; stroke-width: 1.700; }
.addpage { margin-top: 46px; height: 76px; flex: none; border: 2px solid #dcdee1; border-radius: 12px; display: flex; align-items: center; justify-content: center; font-size: 26px; font-weight: 600; color: #3a3f46; }
.bottombar { height: 78px; flex: none; border-top: 3px solid #e6e7e9; display: flex; align-items: center; padding-left: 28px; font-size: 27px; color: #2b2f36; position: relative; }
.bb-item { display: flex; align-items: center; gap: 12px; font-weight: 500; }
.bb-item svg { width: 36px; height: 36px; stroke: #2b2f36; stroke-width: 1.700; }
.timer { margin-left: 60px; }
.bb-page { margin-left: auto; font-weight: 500; }
.slider { width: 381px; height: 8px; margin-left: 31px; background: #dddee1; border-radius: 4px; position: relative; }
.slider-fill { width: 177px; height: 100%; background: #c4c5cd; border-radius: 4px; }
.knob { position: absolute; left: 159px; top: -18px; width: 36px; height: 44px; border-radius: 50%; background: #fff; box-shadow: 0 2px 6px rgba(0,0,0,.2); }
.pct { margin-left: 54px; width: 52px; text-align: center; font-weight: 500; }
.bb-icons { display: flex; margin-left: 60px; margin-right: 26px; }
.bb-icons svg { width: 38px; height: 40px; stroke: #2b2f36; stroke-width: 1.500; margin-right: 40px; }
.bb-icons svg:last-child { margin-right: 0; }

/* taskbar */
.taskbar { background: #0d0d0d; border-top: 2px solid #3a3a3a; display: flex; align-items: stretch; color: #e6e6e6; position: relative; }
.start { width: 105px; display: flex; align-items: center; justify-content: center; padding-right: 16px; }
.start svg { width: 32px; height: 32px; stroke: none; }
.task { width: 78px; margin-right: 16px; display: flex; align-items: center; justify-content: center; position: relative; border-bottom: 5px solid #76b9ed; }
.task svg { width: 44px; height: 44px; stroke: none; }
.task.active { width: 92px; background: #3c3c3c; margin-left: -6px; margin-right: 8px; }
.chrome { width: 44px; height: 44px; border-radius: 50%; background: radial-gradient(circle, #4c8df0 0 28%, #fff 29% 40%, transparent 41%), conic-gradient(from -30deg, #e94335 0 120deg, #fbc116 120deg 240deg, #34a853 240deg); }
.badge { position: absolute; width: 22px; height: 22px; border-radius: 50%; right: 16px; bottom: 12px; }
.orange-b { background: radial-gradient(circle, #e8742e 0 45%, #fbd6c8 46%); }
.white-b { background: #e5eaee; }
.tray { margin-left: auto; display: flex; align-items: center; font-family: "Noto Sans", sans-serif; }
.net { display: grid; grid-template-columns: 60px 75px; font-size: 21px; line-height: 24px; width: 135px; margin-right: 10px; }
.net span:nth-child(even) { text-align: right; white-space: nowrap; }
.tr { width: 32px; height: 32px; margin: 0 7px; stroke: #ddd; stroke-width: 1.500; }
.chevup { stroke-width: 2; margin-left: 0; margin-right: 10px; }
.lang { font-size: 22px; margin: 0 18px 0 15px; }
.clock { width: 120px; display: flex; flex-direction: column; align-items: center; font-size: 21px; line-height: 32px; white-space: nowrap; }
.chat { width: 36px; height: 36px; margin: 0 45px 0 27px; }
```
